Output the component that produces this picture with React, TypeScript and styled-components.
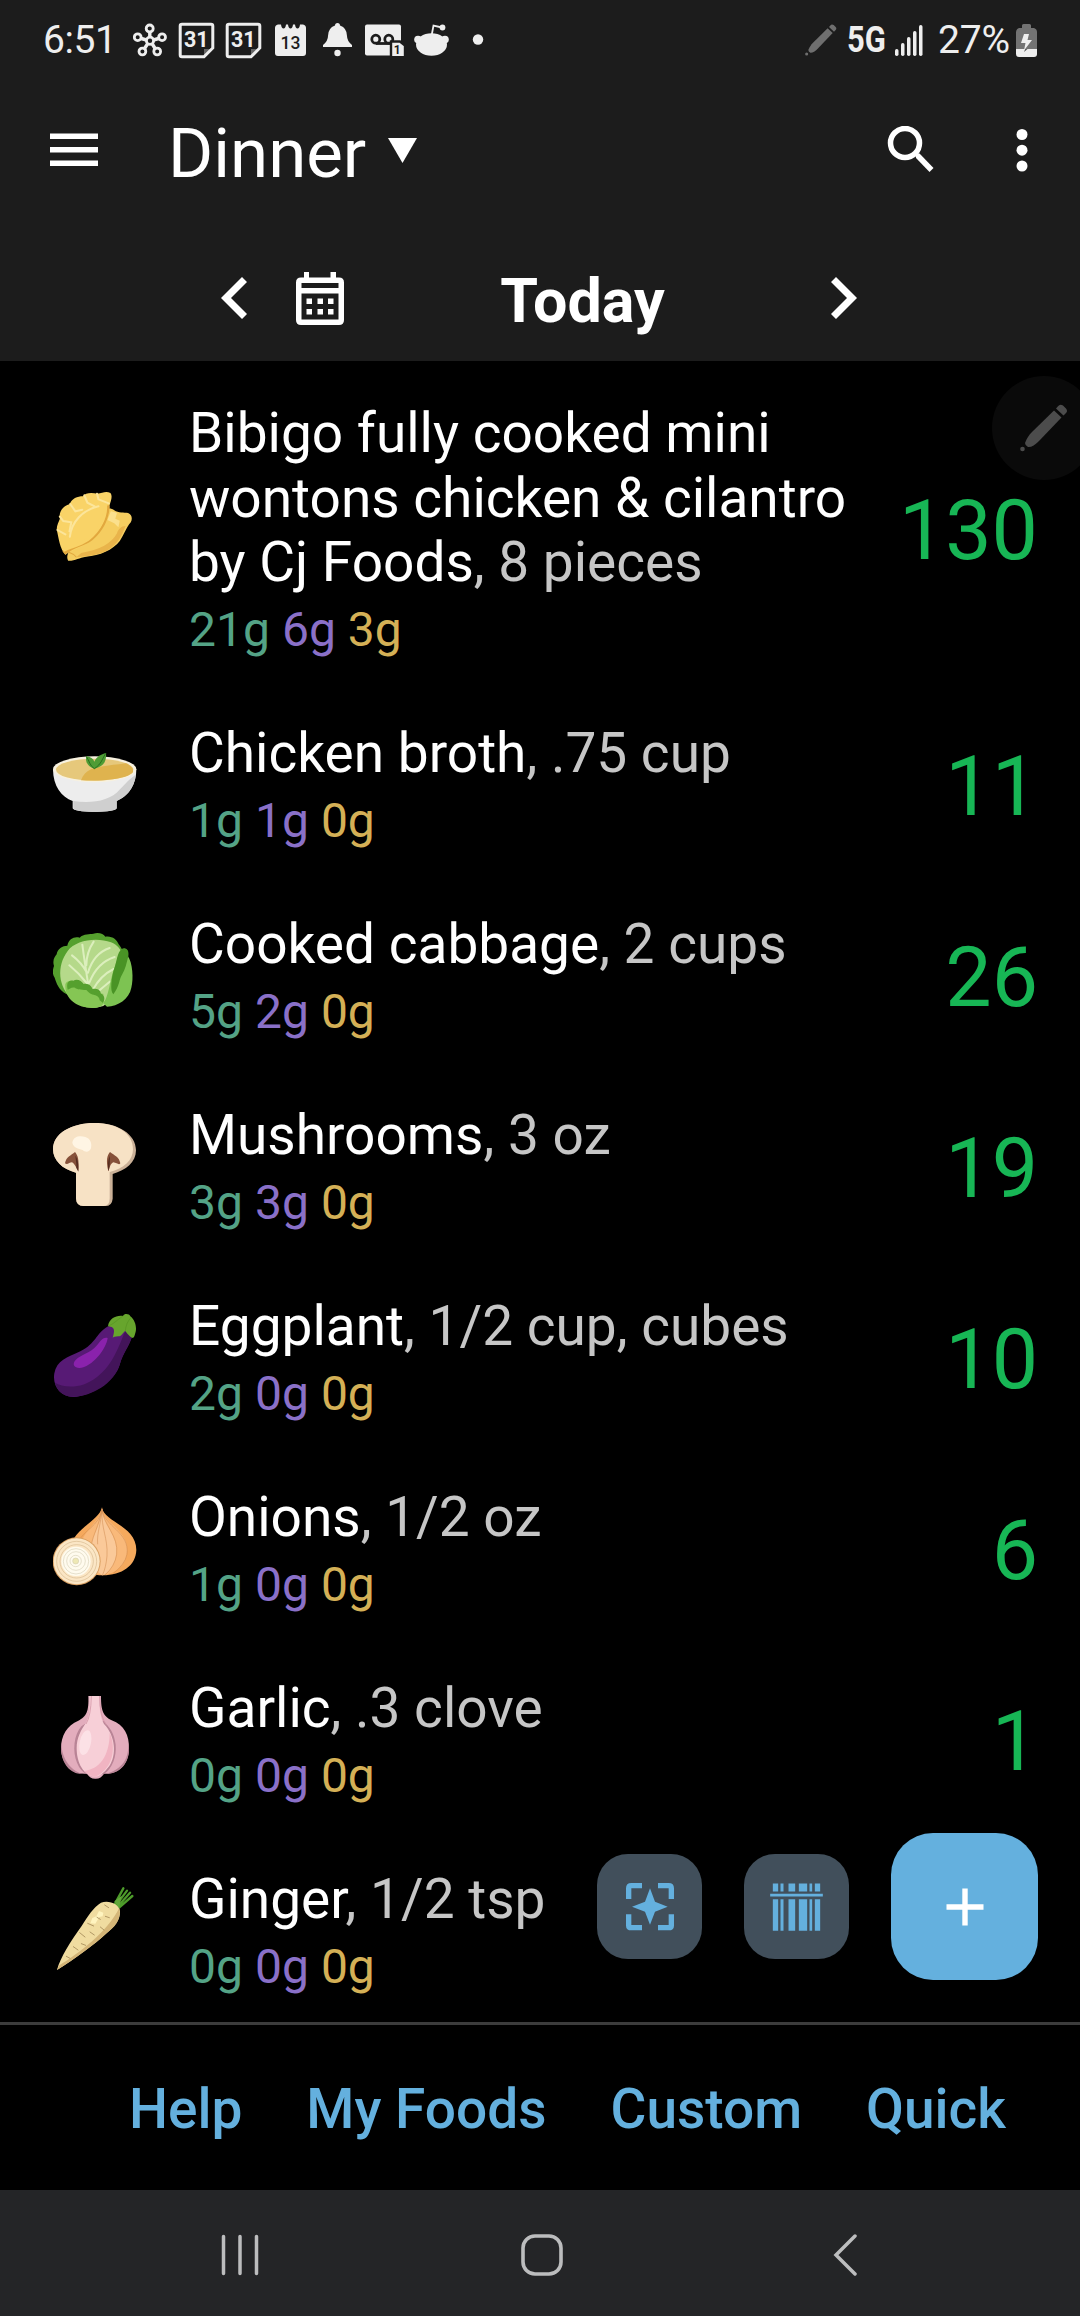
import styled, { createGlobalStyle } from 'styled-components';
import { ReactNode } from 'react';

const colors = {
  bar: `#1c1c1c`,
  blue: `#64b0de`,
  calories: `#17b655`,
  carbs: `#54a386`,
  fat: `#d4b056`,
  muted: `#c6c6c6`,
  protein: `#8a70c8`,
  status: `#eeeeee`,
};

const GlobalStyle = createGlobalStyle`
  * {
    box-sizing: border-box;
  }

  body {
    background: #000;
    margin: 0;
  }
`;

const Screen = styled.div`
  background: #000;
  color: #fff;
  display: flex;
  flex-direction: column;
  font-family: Roboto, sans-serif;
  height: 2316px;
  overflow: hidden;
  position: relative;
  width: 1080px;
`;

const StatusBar = styled.div`
  align-items: center;
  background: ${colors.bar};
  color: ${colors.status};
  display: flex;
  flex: none;
  height: 78px;
  padding: 2px 43px 0;
`;

const Clock = styled.span`
  font-size: 39px;
  letter-spacing: -0.4px;
  width: 90px;
`;

const Network = styled.span`
  font-size: 36px;
  font-weight: 700;
  margin-left: 10px;
  transform: scaleX(0.86);
  transform-origin: left;
  width: 47px;
`;

const BatteryLevel = styled.span`
  font-size: 39px;
  letter-spacing: -0.2px;
  margin-left: 15px;
  width: 78px;
`;

interface IGlyphProps {
  $height: number;
  $left?: number;
  $width: number;
}

const Glyph = styled.svg<IGlyphProps>`
  display: block;
  flex: none;
  height: ${({ $height }) => `${$height}px`};
  margin-left: ${({ $left = 0 }) => `${$left}px`};
  width: ${({ $width }) => `${$width}px`};
`;

const Spacer = styled.div`
  flex: 1;
`;

const Toolbar = styled.header`
  align-items: center;
  background: ${colors.bar};
  display: flex;
  flex: none;
  height: 144px;
  padding: 0 50px;
`;

const Title = styled.h1`
  font-size: 69px;
  font-weight: 400;
  margin: 0 0 0 70px;
  padding-top: 7px;
`;

const DateBar = styled.div`
  align-items: center;
  background: ${colors.bar};
  display: flex;
  flex: none;
  height: 139px;
  padding: 13px 223px 0 221px;
`;

const DateLabel = styled.div`
  flex: 1;
  font-size: 61px;
  font-weight: 700;
  padding: 6px 10px 0 0;
  text-align: center;
`;

const Main = styled.main`
  height: 1661px;
  overflow: hidden;
  padding-top: 9px;
  position: relative;
`;

const Row = styled.div`
  align-items: center;
  display: flex;
  padding: 31.2px 42px 31.2px 53px;
`;

const FoodIcon = styled.svg`
  display: block;
  flex: none;
  height: 84px;
  margin-bottom: 5px;
  width: 84px;
`;

const Details = styled.div`
  margin-left: 52px;
  width: 680px;
`;

const Name = styled.div`
  font-size: 55px;
  line-height: 64.4px;
`;

const Amount = styled.span`
  color: ${colors.muted};
`;

const Macros = styled.div`
  display: flex;
  font-size: 48px;
  gap: 12px;
  line-height: 56.2px;
  margin-top: 8px;
`;

const Macro = styled.span<{ $color: string }>`
  color: ${({ $color }) => $color};
`;

const Calories = styled.div`
  color: ${colors.calories};
  flex: 1;
  font-size: 82.5px;
  line-height: 97px;
  padding-top: 2px;
  text-align: right;
`;

const PenHandle = styled.div`
  align-items: center;
  background: #0a0a0a;
  border-radius: 50%;
  display: flex;
  height: 104px;
  justify-content: center;
  left: 992px;
  position: absolute;
  top: 15px;
  width: 104px;
`;

const Actions = styled.div`
  align-items: center;
  bottom: 42px;
  display: flex;
  gap: 42px;
  position: absolute;
  right: 42px;
`;

const ActionButton = styled.button<{ $primary?: boolean }>`
  align-items: center;
  background: ${({ $primary }) => ($primary ? colors.blue : `#414f5b`)};
  border: 0;
  border-radius: ${({ $primary }) => ($primary ? `42px` : `31px`)};
  display: flex;
  height: ${({ $primary }) => ($primary ? `147px` : `105px`)};
  justify-content: center;
  padding: 0;
  width: ${({ $primary }) => ($primary ? `147px` : `105px`)};
`;

const Links = styled.nav`
  align-items: center;
  border-top: 3px solid #3c3c3c;
  color: ${colors.blue};
  display: flex;
  flex: none;
  font-size: 55px;
  font-weight: 500;
  gap: 64px;
  height: 168px;
  justify-content: flex-end;
  padding: 3px 74px 0 0;
`;

const SystemNav = styled.div`
  align-items: center;
  background: #242527;
  display: flex;
  flex: none;
  height: 126px;
  padding: 4px 0 0 221px;
`;

const Pen = ({ size, color }: { color: string; size: number }) => (
  <Glyph $height={size} $width={size} fill={color} viewBox="0 0 48 48">
    <path d="M34 6.5 41.5 13.5 19 37C15 41 11 43.5 8 43Q5 41.500 5 39C7 34 9 31 12 28Z" />
    <path d="M36 4.500 38 2.200Q40-.5 43 1.500L46 4.500Q48 7 46 9L43.500 11.500Z" />
    <circle cx="2.500" cy="45" r="2.300" />
  </Glyph>
);

const CalendarDay = ({ left }: { left: number }) => (
  <Glyph $height={37} $left={left} $width={37} viewBox="0 0 37 37">
    <path
      d="M4 2.200H33Q34.800 2.200 34.800 4V26L26 34.800H4Q2.200 34.800 2.200 33V4Q2.200 2.200 4 2.200Z"
      fill="none"
      stroke={colors.status}
      strokeWidth="3"
    />
    <path d="M26 35.500V27H35Z" fill={colors.status} opacity=".35" />
    <text
      fill={colors.status}
      fontSize="21.500"
      fontWeight="700"
      textAnchor="middle"
      x="18.300"
      y="25"
    >
      31
    </text>
  </Glyph>
);

const StatusIcons = () => (
  <>
    <Glyph $height={34} $width={34} viewBox="132.500 22.500 34 34">
      <g fill="none" stroke={colors.status} strokeWidth="2.800">
        <circle cx="149.500" cy="40.300" r="3.600" />
        <circle cx="149.200" cy="28" r="3.500" />
        <circle cx="137.200" cy="36.700" r="3.400" />
        <circle cx="161.600" cy="36.700" r="3.400" />
        <circle cx="141.900" cy="51" r="3.400" />
        <circle cx="156.700" cy="51" r="3.400" />
        <path
          d="M149.300 31.500V36.500M140.800 38 146 39.500M153 39.500 158 38M144 48 147 43.500M154.600 48 151.800 43.500"
          strokeWidth="3.400"
        />
      </g>
    </Glyph>
    <CalendarDay left={11} />
    <CalendarDay left={10} />
    <Glyph $height={34} $left={12} $width={33} viewBox="0 0 33 34">
      <path
        d="M4 1.500H7Q7.500 5.500 9.500 5.500T12 1.500H14Q14.500 5.500 16.500 5.500T19 1.500H21Q21.500 5.500 23.500 5.500T26 1.500H29Q32 2 32 5V30Q32 33 29 33H4Q1 33 1 30V5Q1 2 4 1.500Z"
        fill={colors.status}
      />
      <text
        fill={colors.bar}
        fontSize="17.500"
        fontWeight="500"
        textAnchor="middle"
        x="16.500"
        y="25.500"
      >
        13
      </text>
    </Glyph>
    <Glyph
      $height={34}
      $left={15}
      $width={31}
      fill={colors.status}
      viewBox="322 23 31 34"
    >
      <path d="M335 25.500Q335 23 337.500 23T340 25.500Q347 28 347 36Q347 41 352 45V47H323V45Q328 41 328 36Q328 28 335 25.500Z" />
      <circle cx="337.500" cy="53" r="3.200" />
    </Glyph>
    <Glyph $height={34} $left={11} $width={41} viewBox="364 22.500 41 34">
      <rect fill={colors.status} height="31" rx="2" width="36" x="365" y="24" />
      <g fill="none" stroke={colors.bar} strokeWidth="2.800">
        <circle cx="375.800" cy="38.700" r="4" />
        <circle cx="388.800" cy="38.700" r="4" />
        <path d="M375.800 43H392" />
      </g>
      <path
        d="M391 41H400L405 45V57H391Z"
        fill={colors.status}
        stroke={colors.bar}
        strokeWidth="2.400"
      />
      <rect fill={colors.bar} height="2" width="15" x="390.500" y="55.500" />
      <text
        fill={colors.bar}
        fontSize="12"
        fontWeight="700"
        textAnchor="middle"
        x="397.300"
        y="53"
      >
        1
      </text>
    </Glyph>
    <Glyph
      $height={34}
      $left={8}
      $width={37}
      fill={colors.status}
      viewBox="413 22.500 37 34"
    >
      <ellipse cx="431.500" cy="44" rx="15.500" ry="11.300" />
      <circle cx="418" cy="39" r="3.800" />
      <circle cx="445" cy="39" r="3.800" />
      <circle cx="442.500" cy="27" r="2.900" />
      <path
        d="M431.800 34 433.500 25 442 27"
        fill="none"
        stroke={colors.status}
        strokeWidth="1.800"
      />
    </Glyph>
    <Glyph $height={12} $left={22} $width={12} viewBox="0 0 12 12">
      <circle cx="6" cy="5.500" fill={colors.status} r="5.200" />
    </Glyph>
  </>
);

const Dumpling = (
  <FoodIcon preserveAspectRatio="none" viewBox="154 345 244 252">
    <path
      d="M198 572C193 563 196 553 200 545L305 420C315 413 325 415 332 421C344 430 360 427 372 429C384 434 385 447 380 457C366 473 362 492 348 513C328 540 290 557 250 560C230 563 218 573 198 572Z"
      fill="#f5cd60"
    />
    <path
      d="M365 468C355 490 348 520 310 542C280 558 245 558 222 562L236 549C290 540 325 520 340 490C343 478 352 468 365 468Z"
      fill="#e9b44b"
    />
    <path
      d="M312 450 322 424 340 428 335 446 348 452 344 472 332 460Z"
      fill="#fbe08d"
    />
    <path
      d="M190 554C173 535 171 505 165 480C164 466 171 456 174 446C170 424 184 407 203 402C208 386 225 379 241 379C247 367 268 368 283 371C298 368 309 362 321 369C328 379 322 393 318 407C319 440 303 480 270 509C248 528 215 535 190 554Z"
      fill="#f9d367"
    />
    <path
      d="M190 554C215 531 248 528 270 509C303 480 319 440 318 407C307 400 309 420 305 440C294 480 270 506 232 520C211 526 200 535 181 543Z"
      fill="#e2a83e"
    />
    <path
      d="M184 541C205 529 230 526 255 508C290 481 309 438 306 404"
      fill="none"
      stroke="#f9d367"
      strokeWidth="10"
    />
    <g fill="none" stroke="#fce59a" strokeLinecap="round" strokeWidth="6">
      <path d="M204 402 219 424 239 419M245 376 254 398 275 409M282 371 286 388 316 400M174 440 184 453 207 457 202 484M167 480 190 493" />
      <path d="M203 500C208 455 240 420 286 409" />
    </g>
    <path d="M200 547Q215 552 222 562" fill="none" stroke="#e2a83e" strokeWidth="3" />
  </FoodIcon>
);

const Soup = (
  <FoodIcon viewBox="69 60 252 252">
    <path
      d="M69 145C69 195 95 229 128 240V262Q132 272 193 273Q257 272 260 262V240C297 225 319 190 319 145Z"
      fill="#ededed"
    />
    <path
      d="M312 165C290 182 283 192 270 205C240 242 180 248 130 240V262Q132 272 193 273Q257 272 260 262V240C290 227 313 203 318 160Z"
      fill="#cfcfcf"
    />
    <ellipse cx="194" cy="145" fill="#f7f1df" rx="125" ry="39" />
    <ellipse cx="194" cy="146" fill="#e6c87b" rx="116" ry="33" />
    <path
      d="M153 178C165 145 195 140 220 136C250 131 270 130 288 127C306 135 311 146 309 153C300 170 230 182 153 178Z"
      fill="#dfb34e"
    />
    <path
      d="M193 143C172 137 165 120 169 106C181 107 190 113 193 122C200 106 213 100 228 96C230 120 222 137 193 143Z"
      fill="#4f9c35"
    />
    <path d="M193 143C180 135 178 120 169 106M193 143C215 129 217 112 228 96" fill="none" stroke="#28701f" strokeWidth="3" />
  </FoodIcon>
);

const Cabbage = (
  <FoodIcon viewBox="69 633 252 252">
    <path
      d="M110 820C84 805 80 787 74 770C65 758 69 743 72 735C66 716 76 705 80 700C82 683 98 674 112 674C116 653 134 645 149 650C161 637 180 640 190 638C205 633 221 638 226 647C247 644 260 656 266 670C282 690 285 705 280 740L205 855Z"
      fill="#55a02e"
    />
    <path
      d="M128 835C84 800 79 735 113 690C137 657 200 648 243 664C282 680 285 720 279 755C266 810 244 839 220 855C184 866 149 860 128 835Z"
      fill="#b5d98a"
    />
    <g fill="none" stroke="#dcefbd" strokeLinecap="round" strokeWidth="6">
      <path d="M157 671Q164 725 177 805M118 733Q145 755 170 786M126 703Q155 725 170 754M191 662Q169 695 169 733M239 681Q191 697 174 755M254 708Q201 725 178 785M251 744Q212 763 188 807M239 782 203 812" />
    </g>
    <path
      d="M106 790C103 837 145 862 190 861C206 860 216 856 220 848L220 818C202 820 190 811 182 802C163 807 150 782 130 782C120 778 109 781 106 790Z"
      fill="#85c654"
    />
    <path
      d="M113 806C107 780 121 778 130 779C142 772 155 780 161 789C177 786 184 796 188 804C205 800 213 811 212 817C224 824 226 835 219 846L209 838C209 826 197 823 191 821C181 820 173 811 169 807C151 805 142 806 135 800C125 797 118 804 113 806Z"
      fill="#55a02e"
    />
    <path
      d="M219 846C234 835 239 785 250 750C263 713 265 696 276 684C287 680 296 688 293 704C308 724 311 773 304 800C297 835 264 855 231 857Z"
      fill="#7dc352"
    />
    <path
      d="M276 684C290 677 298 690 295 706C290 725 286 746 276 761C267 775 269 795 250 820C239 810 245 770 251 748C262 720 260 695 276 684Z"
      fill="#499325"
    />
  </FoodIcon>
);

const Mushroom = (
  <FoodIcon viewBox="69 66 252 252">
    <path
      d="M195 66C265 66 318 100 318 148C318 184 288 208 248 219V293Q246 315 226 315H160Q139 315 138 292V215C97 205 69 178 69 145C69 98 123 66 195 66Z"
      fill="#cbb198"
    />
    <path
      d="M193 66C260 66 309 96 309 145C309 179 281 203 239 213V292Q239 315 221 315H160Q139 315 138 292V215C97 205 69 178 69 145C69 98 123 66 193 66Z"
      fill="#f7e2c5"
    />
    <path d="M127 125C130 106 149 103 166 108C180 112 187 126 183 142C178 155 165 154 158 147C145 143 130 140 127 125Z" fill="#fff5e4" />
    <path d="M105 187C108 168 123 163 135 153C143 162 148 176 145 210C137 199 136 190 126 184C118 184 112 193 105 187Z" fill="#86513a" />
    <path d="M271 187C268 168 253 163 240 153C232 163 227 176 235 211C241 198 239 190 250 184C260 185 267 194 271 187Z" fill="#86513a" />
    <path d="M136 164C145 176 146 195 145 212L139 200C140 186 137 175 136 164ZM240 164C233 177 233 198 236 211L239 192Z" fill="#552d20" />
  </FoodIcon>
);

const Eggplant = (
  <FoodIcon viewBox="69 639 252 252">
    <path
      d="M234 676C196 699 199 727 151 751C111 769 80 779 73 817C66 858 96 893 139 887C203 877 257 832 269 791C279 753 296 739 306 707C306 683 259 669 234 676Z"
      fill="#571a75"
    />
    <path
      d="M75 845C100 860 154 866 202 827C241 796 256 759 270 728C279 710 280 695 290 690L306 705C297 738 280 754 269 791C255 838 202 879 139 887C101 891 81 869 75 845Z"
      fill="#43145a"
    />
    <path d="M233 711C217 707 209 725 201 733C181 758 153 760 137 777C125 790 133 801 148 801C186 800 230 742 233 711Z" fill="#8a22ac" />
    <path
      d="M234 675C238 652 259 642 279 645C283 636 298 638 301 646C317 658 320 681 317 692C314 700 315 706 309 711C297 707 292 697 286 690C278 694 276 706 265 706C256 707 249 708 248 711C252 696 254 686 249 681C244 676 239 678 234 675Z"
      fill="#67a52d"
    />
    <path d="M234 675C250 670 257 660 279 645M286 690Q288 665 303 650" fill="none" opacity=".5" stroke="#508b1d" strokeWidth="3" />
  </FoodIcon>
);

const Onion = (
  <FoodIcon viewBox="69 72 252 252">
    <path
      d="M216 79C222 125 318 132 319 207C317 255 276 282 218 283C163 282 123 260 121 207C125 142 206 124 216 79Z"
      fill="#f5a95d"
    />
    <path d="M216 82C219 127 298 147 291 214C287 252 260 278 218 283C179 278 148 250 148 214C150 149 210 127 216 82Z" fill="#f9b97a" />
    <path d="M216 84C219 135 262 160 259 216C257 246 238 276 217 283C194 263 181 248 183 206C184 163 213 138 216 84Z" fill="#fac999" />
    <g fill="none" stroke="#d08b52" strokeWidth="1.600">
      <path d="M216 84C213 145 234 169 231 225Q228 260 217 283M216 84C219 132 267 163 260 220Q255 255 225 282M216 84C222 137 300 152 291 220Q285 250 249 278M216 84C208 137 159 147 144 185M216 84C205 140 190 158 184 192M216 84C213 130 200 154 203 190" />
    </g>
    <circle cx="140" cy="241" fill="#d99f61" r="72" />
    <circle cx="140" cy="241" fill="#fbe6c5" r="69" />
    <g fill="none" stroke="#d3b58a" strokeWidth="1.800">
      <circle cx="140" cy="241" r="60" />
      <circle cx="140" cy="241" r="50" />
    </g>
    <circle cx="138" cy="241" fill="#fffbee" r="44" />
    <g fill="none" stroke="#cfc9ae" strokeWidth="1.600">
      <circle cx="138" cy="241" r="38" />
      <circle cx="138" cy="240" r="28" />
      <circle cx="137" cy="240" r="17" />
      <circle cx="137" cy="240" fill="#eee8b4" r="9" />
    </g>
  </FoodIcon>
);

const Garlic = (
  <FoodIcon viewBox="69 645 252 252">
    <path
      d="M175 645H213C213 691 220 705 245 718C283 732 298 763 297 804C296 851 263 882 222 878C216 888 207 894 195 893C184 893 178 888 171 878C126 883 94 848 93 802C93 764 111 733 145 719C169 707 177 692 175 645Z"
      fill="#e3adbd"
    />
    <path d="M95 780C91 825 118 868 159 879C122 881 94 849 93 802ZM294 780C300 830 277 867 227 878C268 881 298 846 297 804Z" fill="#b98496" />
    <path d="M155 735C131 760 127 812 141 845Q151 870 171 880L220 880C248 862 260 826 257 791C253 757 239 738 220 720L179 720Z" fill="#b98496" />
    <path
      d="M178 645H208C208 685 212 711 222 729C257 765 260 823 238 855Q215 886 195 888C161 882 140 848 140 801C140 770 153 747 166 728C177 711 180 688 178 645Z"
      fill="#f7cfd7"
    />
    <path d="M239 755C258 798 247 847 222 869C211 879 203 884 195 888C182 885 170 879 162 870C207 864 239 827 239 755Z" fill="#f1b4c2" />
    <ellipse cx="166" cy="785" fill="#fce1e6" rx="17" ry="38" transform="rotate(12 166 785)" />
    <path d="M184 645Q183 705 168 729M209 645Q209 706 230 733" fill="none" stroke="#d597a8" strokeWidth="2.500" />
  </FoodIcon>
);

const Parsnip = (
  <FoodIcon viewBox="69 78 252 252">
    <g fill="none" stroke="#4d9b2a" strokeLinecap="round" strokeWidth="7">
      <path d="M254 130 280 82M258 133 291 89M263 137 300 95M268 139 307 105" />
    </g>
    <path d="M253 121 275 104 267 142Z" fill="#62a73b" />
    <path
      d="M213 125C235 116 268 128 270 151C271 179 252 199 228 218C193 251 134 293 81 327C91 289 122 241 155 195C173 166 190 139 213 125Z"
      fill="#f0dca0"
    />
    <path d="M268 140C275 179 252 199 228 218C193 251 134 293 81 327L88 313C143 278 231 216 268 140Z" fill="#d4b577" />
    <path d="M207 150 220 155 218 166 208 168 196 188 181 187 187 171 199 166Z" fill="#fff4bf" />
    <g fill="none" stroke="#a48958" strokeLinecap="round" strokeWidth="2.500">
      <path d="M224 132 236 140M226 166 238 170M201 169 211 175M173 187 191 195M180 213 193 222M149 215 165 228M154 248 167 253M130 257 144 267M109 286 120 292M211 198 222 207" />
    </g>
  </FoodIcon>
);

interface IFood {
  amount: string;
  calories: number;
  icon: ReactNode;
  macros: [number, number, number];
  name: string;
}

const foods: IFood[] = [
  {
    amount: `8 pieces`,
    calories: 130,
    icon: Dumpling,
    macros: [21, 6, 3],
    name: `Bibigo fully cooked mini wontons chicken & cilantro by Cj Foods`,
  },
  { amount: `.75 cup`, calories: 11, icon: Soup, macros: [1, 1, 0], name: `Chicken broth` },
  { amount: `2 cups`, calories: 26, icon: Cabbage, macros: [5, 2, 0], name: `Cooked cabbage` },
  { amount: `3 oz`, calories: 19, icon: Mushroom, macros: [3, 3, 0], name: `Mushrooms` },
  { amount: `1/2 cup, cubes`, calories: 10, icon: Eggplant, macros: [2, 0, 0], name: `Eggplant` },
  { amount: `1/2 oz`, calories: 6, icon: Onion, macros: [1, 0, 0], name: `Onions` },
  { amount: `.3 clove`, calories: 1, icon: Garlic, macros: [0, 0, 0], name: `Garlic` },
  { amount: `1/2 tsp`, calories: 0, icon: Parsnip, macros: [0, 0, 0], name: `Ginger` },
];

const FoodRow = ({ amount, calories, icon, macros, name }: IFood) => (
  <Row>
    {icon}
    <Details>
      <Name>
        {name}
        <Amount>, {amount}</Amount>
      </Name>
      <Macros>
        <Macro $color={colors.carbs}>{macros[0]}g</Macro>
        <Macro $color={colors.protein}>{macros[1]}g</Macro>
        <Macro $color={colors.fat}>{macros[2]}g</Macro>
      </Macros>
    </Details>
    {calories > 0 && <Calories>{calories}</Calories>}
  </Row>
);

export default function App(): JSX.Element {
  return (
    <Screen>
      <GlobalStyle />
      <StatusBar>
        <Clock>6:51</Clock>
        <StatusIcons />
        <Spacer />
        <Pen color="#6f6f6f" size={32} />
        <Network>5G</Network>
        <Glyph
          $height={31}
          $left={1}
          $width={28}
          fill={colors.status}
          viewBox="0 0 28 31"
        >
          <rect height="7" rx="1.700" width="3.500" x="0" y="24" />
          <rect height="13" rx="1.700" width="3.500" x="6" y="18" />
          <rect height="19" rx="1.700" width="3.500" x="12" y="12" />
          <rect height="25" rx="1.700" width="3.500" x="18" y="6" />
          <rect height="31" rx="1.700" width="3.500" x="24" y="0" />
        </Glyph>
        <BatteryLevel>27%</BatteryLevel>
        <Glyph $height={33} $width={21} viewBox="0 0 21 33">
          <path
            d="M6 1.500Q6 0 7.500 0H13.500Q15 0 15 1.500V4H18Q21 5 21 8V26H0V8Q0 5 3 4H6Z"
            fill="#737373"
          />
          <path d="M0 25H21V30Q21 33 18 33H3Q0 33 0 30Z" fill={colors.status} />
          <path d="M8 10H13L11.500 16H16L8 26.500 9.500 19H5Z" fill={colors.status} />
          <path d="M9.200 25H11.500L8 28Z" fill="#555" />
        </Glyph>
      </StatusBar>

      <Toolbar>
        <Glyph $height={34} $width={48} fill="#fff" viewBox="0 0 48 34">
          <path d="M0 .5H48V6H0ZM0 14H48V19.500H0ZM0 27.500H48V33H0Z" />
        </Glyph>
        <Title>Dinner</Title>
        <Glyph $height={26} $left={22} $width={29} fill="#fff" viewBox="0 0 29 26">
          <path d="M0 1H29L14.500 26Z" />
        </Glyph>
        <Spacer />
        <Glyph $height={48} $width={48} viewBox="886 126 48 48">
          <circle cx="905" cy="143" fill="none" r="14.500" stroke="#fff" strokeWidth="5.500" />
          <path d="M915.500 153.500 919.500 153.500 933.500 168 929.500 172 916 158Z" fill="#fff" />
        </Glyph>
        <Glyph $height={44} $left={80} $width={16} fill="#fff" viewBox="0 0 16 44">
          <circle cx="8" cy="6.500" r="5.500" />
          <circle cx="8" cy="22.200" r="5.500" />
          <circle cx="8" cy="38" r="5.500" />
        </Glyph>
      </Toolbar>

      <DateBar>
        <Glyph $height={42} $width={26} fill="#fff" viewBox="0 0 26 42">
          <path d="M21 0 26 5 10 21 26 37 21 42 0 21Z" />
        </Glyph>
        <Glyph $height={53} $left={49} $width={48} fill="#fff" viewBox="0 0 48 53">
          <path
            d="M8 0H13V5.500H34.500V0H40V5.500H43Q48 5.500 48 10.500V48Q48 53 43 53H5Q0 53 0 48V10.500Q0 5.500 5 5.500H8ZM5.500 11V16H42.500V11ZM5.500 21.500V47.500H42.500V21.500Z"
            fillRule="evenodd"
          />
          <path d="M10.500 26.500H16V32H10.500ZM21.500 26.500H27V32H21.500ZM32 26.500H37.500V32H32ZM10.500 37H16V42.500H10.500ZM21.500 37H27V42.500H21.500ZM32 37H37.500V42.500H32Z" />
        </Glyph>
        <DateLabel>Today</DateLabel>
        <Glyph $height={42} $width={26} fill="#fff" viewBox="0 0 26 42">
          <path d="M5 0 0 5 16 21 0 37 5 42 26 21Z" />
        </Glyph>
      </DateBar>

      <Main>
        {foods.map((food) => (
          <FoodRow key={food.name} {...food} />
        ))}
        <PenHandle>
          <Pen color="#4c4c4c" size={48} />
        </PenHandle>
        <Actions>
          <ActionButton>
            <Glyph $height={48} $width={48} viewBox="0 0 144 144">
              <path
                d="M8 48V16Q8 8 16 8H48M96 8H128Q136 8 136 16V48M136 94V128Q136 134 128 134H96M48 134H16Q8 134 8 128V94"
                fill="none"
                stroke={colors.blue}
                strokeWidth="16"
              />
              <path d="M72 16 87 56 125 71 87 86 72 125 57 86 18 71 57 56Z" fill={colors.blue} />
            </Glyph>
          </ActionButton>
          <ActionButton>
            <Glyph $height={48} $width={53} fill={colors.blue} viewBox="631 217.500 158 144">
              <path d="M639 219H655V243H639ZM662 219H671V243H662ZM686 219H706V243H686ZM717 219H742V243H717ZM749 219H757V243H749ZM765 219H781V243H765Z" />
              <path d="M631 250H789V258H631Z" />
              <path d="M639 266H655V361H639ZM662 266H671V361H662ZM686 266H706V361H686ZM717 266H742V361H717ZM749 266H757V361H749ZM765 266H781V361H765Z" />
            </Glyph>
          </ActionButton>
          <ActionButton $primary>
            <Glyph $height={38} $width={38} fill="#fff" viewBox="0 0 38 38">
              <path d="M16.300 .5H21.700V16.300H37.500V21.700H21.700V37.500H16.300V21.700H.5V16.300H16.300Z" />
            </Glyph>
          </ActionButton>
        </Actions>
      </Main>

      <Links>
        <span>Help</span>
        <span>My Foods</span>
        <span>Custom</span>
        <span>Quick</span>
      </Links>

      <SystemNav>
        <Glyph $height={42} $width={38} viewBox="0 0 38 42">
          <path
            d="M2.500 2.500V39.500M19 2.500V39.500M35.500 2.500V39.500"
            stroke="#bcbdbe"
            strokeLinecap="round"
            strokeWidth="3.500"
          />
        </Glyph>
        <Glyph $height={42} $left={262} $width={42} viewBox="0 0 42 42">
          <rect
            fill="none"
            height="38"
            rx="12"
            stroke="#bcbdbe"
            strokeWidth="3.600"
            width="38"
            x="2"
            y="2"
          />
        </Glyph>
        <Glyph $height={42} $left={270} $width={26} viewBox="0 0 26 42">
          <path
            d="M22 2 3 21 22 40"
            fill="none"
            stroke="#bcbdbe"
            strokeLinecap="round"
            strokeWidth="3.500"
          />
        </Glyph>
      </SystemNav>
    </Screen>
  );
}
